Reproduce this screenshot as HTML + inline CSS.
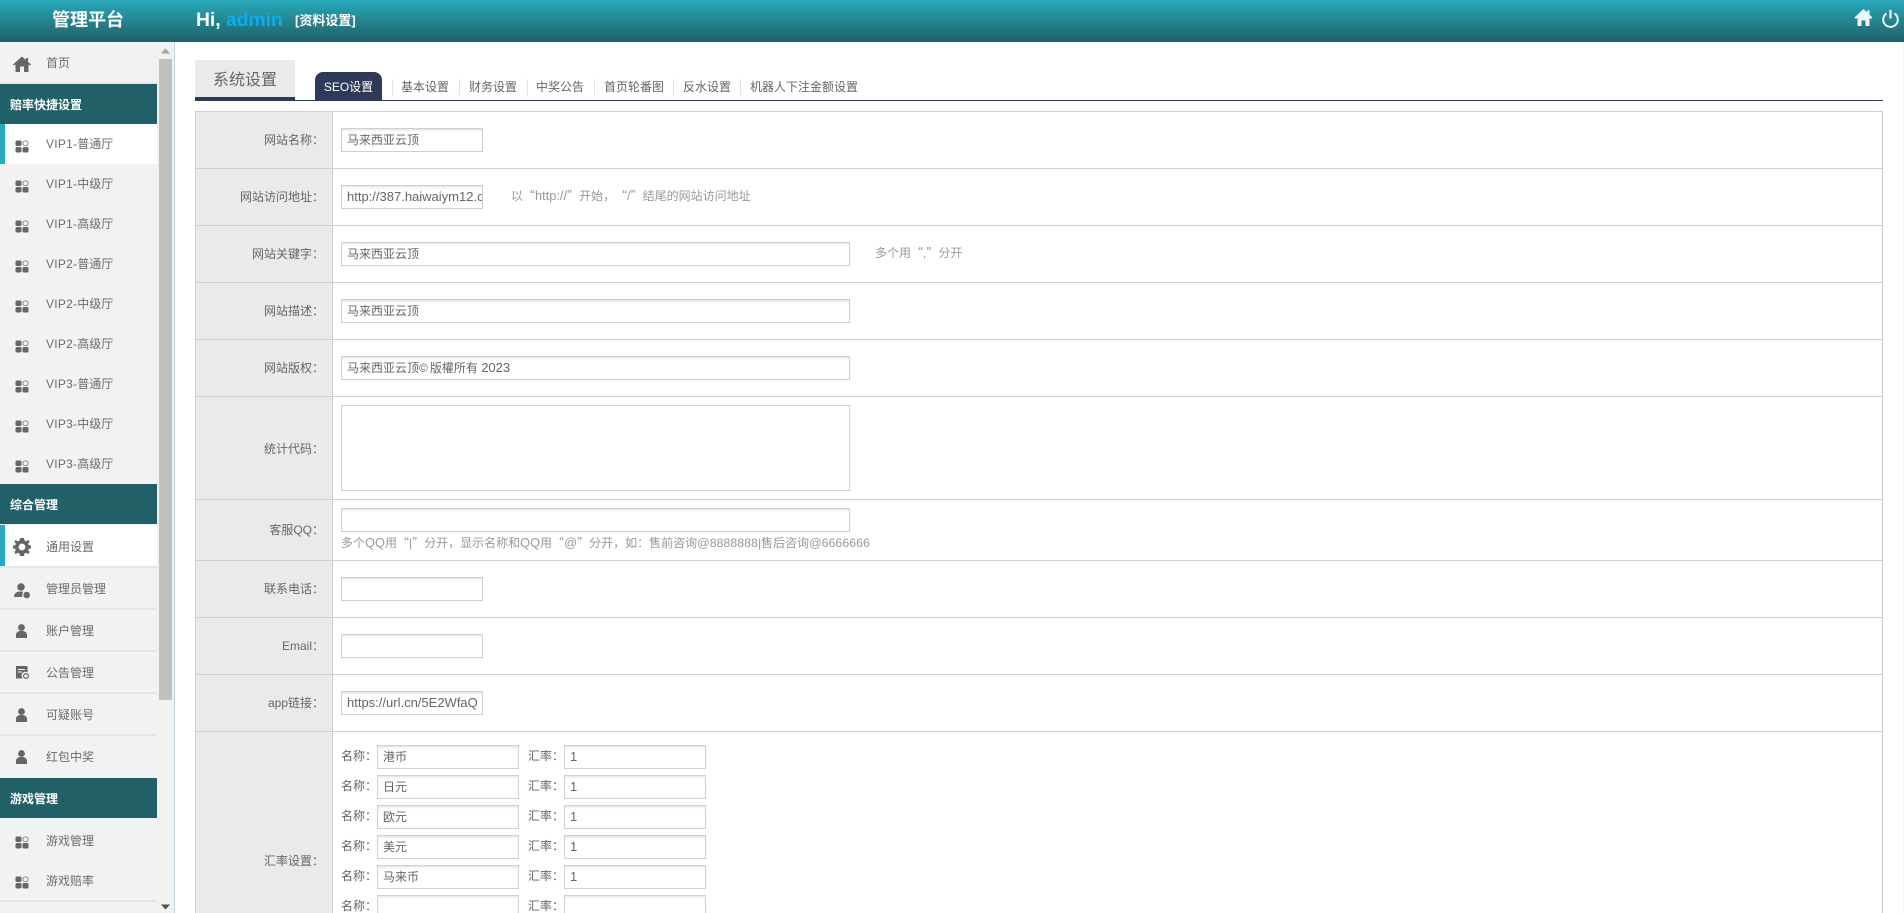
<!DOCTYPE html>
<html lang="zh-CN"><head><meta charset="utf-8"><title>管理平台</title>
<style>
html,body{margin:0;padding:0;width:1904px;height:913px;overflow:hidden;background:#fff}
body{position:relative;font-family:"Liberation Sans","Noto Sans CJK SC",sans-serif;font-size:12px;color:#666;text-spacing-trim:space-all}
div,svg{position:absolute;box-sizing:border-box}
#wrap{left:0;top:0;width:1904px;height:913px;overflow:hidden}
.hd{left:0;top:0;width:1904px;height:42px;background:linear-gradient(#28a9ba,#205f65)}
.w{color:#fff;font-weight:bold;white-space:nowrap}
.side{left:0;top:42px;width:157px;height:871px;background:#f2f2f2}
.sec{left:0;width:157px;height:40px;background:#206066;color:#fff;font-weight:bold;line-height:42px;padding-left:10px}
.act{left:0;width:157px;background:#fff;border-left:5px solid #27abba}
.ln{left:0;width:157px;height:2px;background:#e6e6e6}
.t{left:46px;line-height:20px;height:20px;white-space:nowrap;color:#6b6b6b}
.v{letter-spacing:.25px}
.sb{left:157px;top:42px;width:17px;height:871px;background:#f1f1f1}
.th{left:159px;top:59px;width:13px;height:641px;background:#c1c1c1}
.tb{left:195px;top:111px;width:1688px;height:802px;border:1px solid #cfcfcf;border-width:1px 1px 0 1px}
.lc{left:196px;width:136px;background:#eaeaea}
.r{left:195px;width:1688px;height:1px;background:#cfcfcf}
.l{left:196px;width:128px;text-align:right;line-height:20px;height:20px;white-space:nowrap}
.i{height:24px;border:1px solid #d0d0d0;box-shadow:inset 0 2px 2px -1px #dedede;background:#fff;padding-left:5px;line-height:22px;overflow:hidden;white-space:nowrap;color:#666}
.s{width:142px}.g{width:509px}
.h{line-height:20px;height:20px;white-space:nowrap;color:#999}
.q{font-family:"Noto Sans CJK SC",sans-serif}
.la{font-size:12.8px}
.ld{font-size:12.4px}
.lb{font-size:13px}
.tab{top:77px;height:20px;line-height:20px;color:#666;white-space:nowrap}
.dv{top:79px;width:1px;height:16px;background:#e3e3e3}
</style></head><body><div id="wrap">
<div class="hd"></div>
<div class="w" style="left:52px;top:7px;font-size:18px;line-height:26px">管理平台</div>
<div class="w" style="left:196px;top:8px;font-size:19.3px;line-height:26px">Hi, <span style="color:#0badee">admin</span></div>
<div class="w" style="left:295px;top:10px;font-size:13px;line-height:22px">[资料设置]</div>
<svg style="left:1854px;top:8px" width="19" height="19" viewBox="0 0 19 19"><path d="M9.5 1 L0.5 9.5 L2 11 L3.5 9.7 V18 H7.5 V12.5 H11.5 V18 H15.5 V9.7 L17 11 L18.5 9.5 L15.5 6.7 V2.5 H13 V4.4 Z" fill="#eef6f7"/></svg>
<svg style="left:1881px;top:9px" width="19" height="19" viewBox="0 0 19 19"><path d="M5.5 4.5 A7.3 7.3 0 1 0 13.5 4.5" fill="none" stroke="#eef6f7" stroke-width="2"/><path d="M9.5 1 V9.5" stroke="#eef6f7" stroke-width="2.2"/></svg>

<div class="side"></div>
<div class="sb"></div><div class="th"></div>
<svg style="left:161px;top:48px" width="10" height="6"><path d="M0 5.5 L4.5 .5 L9 5.5Z" fill="#a3a3a3"/></svg>
<svg style="left:161px;top:904px" width="10" height="6"><path d="M0 .5 L4.5 5.5 L9 .5Z" fill="#505050"/></svg>
<div style="left:174px;top:42px;width:1px;height:871px;background:#bfd3dc"></div>
<div style="left:1903px;top:42px;width:1px;height:871px;background:#f2f2f2"></div>

<svg style="left:13px;top:55px" width="18" height="18" viewBox="0 0 18 18"><path d="M9 1.5 L0 9.5 L1 10.5 L2.5 9.5 V17 H7 V11.5 H11 V17 H15.5 V9.5 L17 10.5 L18 9.5 L15 6.8 V3 H13 V5 Z" fill="#666"/></svg>
<div class="t" style="top:53px">首页</div>
<div class="ln" style="top:82px"></div>

<div class="sec" style="top:84px">赔率快捷设置</div>
<div class="act" style="top:124px;height:40px"></div>
<div class="t" style="top:134px"><span class="v">VIP1-</span>普通厅</div>
<div class="t" style="top:174px"><span class="v">VIP1-</span>中级厅</div>
<div class="t" style="top:214px"><span class="v">VIP1-</span>高级厅</div>
<div class="t" style="top:254px"><span class="v">VIP2-</span>普通厅</div>
<div class="t" style="top:294px"><span class="v">VIP2-</span>中级厅</div>
<div class="t" style="top:334px"><span class="v">VIP2-</span>高级厅</div>
<div class="t" style="top:374px"><span class="v">VIP3-</span>普通厅</div>
<div class="t" style="top:414px"><span class="v">VIP3-</span>中级厅</div>
<div class="t" style="top:454px"><span class="v">VIP3-</span>高级厅</div>
<svg style="left:15px;top:140px" width="14" height="13" viewBox="0 0 14 14" preserveAspectRatio="none"><g fill="#666"><rect x=".5" y=".5" width="6" height="6" rx="1.5"/><rect x=".5" y="7.5" width="6" height="6" rx="1.5"/><rect x="7.5" y="7.5" width="6" height="6" rx="1.5"/></g><circle cx="10.5" cy="3.5" r="2.6" fill="none" stroke="#888"/></svg>
<svg style="left:15px;top:180px" width="14" height="13" viewBox="0 0 14 14" preserveAspectRatio="none"><g fill="#666"><rect x=".5" y=".5" width="6" height="6" rx="1.5"/><rect x=".5" y="7.5" width="6" height="6" rx="1.5"/><rect x="7.5" y="7.5" width="6" height="6" rx="1.5"/></g><circle cx="10.5" cy="3.5" r="2.6" fill="none" stroke="#888"/></svg>
<svg style="left:15px;top:220px" width="14" height="13" viewBox="0 0 14 14" preserveAspectRatio="none"><g fill="#666"><rect x=".5" y=".5" width="6" height="6" rx="1.5"/><rect x=".5" y="7.5" width="6" height="6" rx="1.5"/><rect x="7.5" y="7.5" width="6" height="6" rx="1.5"/></g><circle cx="10.5" cy="3.5" r="2.6" fill="none" stroke="#888"/></svg>
<svg style="left:15px;top:260px" width="14" height="13" viewBox="0 0 14 14" preserveAspectRatio="none"><g fill="#666"><rect x=".5" y=".5" width="6" height="6" rx="1.5"/><rect x=".5" y="7.5" width="6" height="6" rx="1.5"/><rect x="7.5" y="7.5" width="6" height="6" rx="1.5"/></g><circle cx="10.5" cy="3.5" r="2.6" fill="none" stroke="#888"/></svg>
<svg style="left:15px;top:300px" width="14" height="13" viewBox="0 0 14 14" preserveAspectRatio="none"><g fill="#666"><rect x=".5" y=".5" width="6" height="6" rx="1.5"/><rect x=".5" y="7.5" width="6" height="6" rx="1.5"/><rect x="7.5" y="7.5" width="6" height="6" rx="1.5"/></g><circle cx="10.5" cy="3.5" r="2.6" fill="none" stroke="#888"/></svg>
<svg style="left:15px;top:340px" width="14" height="13" viewBox="0 0 14 14" preserveAspectRatio="none"><g fill="#666"><rect x=".5" y=".5" width="6" height="6" rx="1.5"/><rect x=".5" y="7.5" width="6" height="6" rx="1.5"/><rect x="7.5" y="7.5" width="6" height="6" rx="1.5"/></g><circle cx="10.5" cy="3.5" r="2.6" fill="none" stroke="#888"/></svg>
<svg style="left:15px;top:380px" width="14" height="13" viewBox="0 0 14 14" preserveAspectRatio="none"><g fill="#666"><rect x=".5" y=".5" width="6" height="6" rx="1.5"/><rect x=".5" y="7.5" width="6" height="6" rx="1.5"/><rect x="7.5" y="7.5" width="6" height="6" rx="1.5"/></g><circle cx="10.5" cy="3.5" r="2.6" fill="none" stroke="#888"/></svg>
<svg style="left:15px;top:420px" width="14" height="13" viewBox="0 0 14 14" preserveAspectRatio="none"><g fill="#666"><rect x=".5" y=".5" width="6" height="6" rx="1.5"/><rect x=".5" y="7.5" width="6" height="6" rx="1.5"/><rect x="7.5" y="7.5" width="6" height="6" rx="1.5"/></g><circle cx="10.5" cy="3.5" r="2.6" fill="none" stroke="#888"/></svg>
<svg style="left:15px;top:460px" width="14" height="13" viewBox="0 0 14 14" preserveAspectRatio="none"><g fill="#666"><rect x=".5" y=".5" width="6" height="6" rx="1.5"/><rect x=".5" y="7.5" width="6" height="6" rx="1.5"/><rect x="7.5" y="7.5" width="6" height="6" rx="1.5"/></g><circle cx="10.5" cy="3.5" r="2.6" fill="none" stroke="#888"/></svg>

<div class="sec" style="top:484px">综合管理</div>
<div class="act" style="top:525px;height:41px"></div>
<div class="ln" style="top:566px"></div><div class="ln" style="top:608px"></div><div class="ln" style="top:650px"></div><div class="ln" style="top:692px"></div><div class="ln" style="top:734px"></div>
<div class="t" style="top:537px">通用设置</div>
<div class="t" style="top:579px">管理员管理</div>
<div class="t" style="top:621px">账户管理</div>
<div class="t" style="top:663px">公告管理</div>
<div class="t" style="top:705px">可疑账号</div>
<div class="t" style="top:747px">红包中奖</div>
<svg style="left:13px;top:538px" width="18" height="18" viewBox="0 0 18 18"><path fill-rule="evenodd" fill="#666" d="M7 0 H11 L11.5 2.5 L13.3 3.3 L15.4 1.9 L16.6 4 L15.2 5.6 L15.8 7.3 L18 7.5 V10.5 L15.8 10.7 L15.2 12.4 L16.6 14 L15.4 16.1 L13.3 14.7 L11.5 15.5 L11 18 H7 L6.5 15.5 L4.7 14.7 L2.6 16.1 L1.4 14 L2.8 12.4 L2.2 10.7 L0 10.5 V7.5 L2.2 7.3 L2.8 5.6 L1.4 4 L2.6 1.9 L4.7 3.3 L6.5 2.5 Z M9 5.6 A3.4 3.4 0 1 0 9 12.4 A3.4 3.4 0 1 0 9 5.6 Z"/></svg>
<svg style="left:14px;top:583px" width="17" height="16" viewBox="0 0 17 16"><g fill="#666"><circle cx="7" cy="4" r="3.8"/><path d="M0 14 C0 10 3 8.5 7 8.5 C8 8.5 8.8 8.6 9.4 8.8 C8.2 10 7.8 12.5 8.6 14 Z"/><circle cx="12.7" cy="12" r="3.3"/></g></svg>
<svg style="left:16px;top:624px" width="11" height="14" viewBox="0 0 11 14"><g fill="#666"><circle cx="5.5" cy="3.5" r="3.4"/><path d="M0 14 V11 C0 8.5 2 7.5 3.5 7 H7.5 C9 7.5 11 8.5 11 11 V14 Z"/></g></svg>
<svg style="left:16px;top:666px" width="13" height="13" viewBox="0 0 13 13"><path fill="#666" d="M0 0 H11.5 V6.5 A3.3 3.3 0 0 0 7 12.5 H0 Z"/><path d="M2 3.5 H9 M2 6 H6" stroke="#f2f2f2"/><circle cx="10" cy="10" r="2.4" fill="none" stroke="#666" stroke-width="1.2"/></svg>
<svg style="left:16px;top:708px" width="11" height="14" viewBox="0 0 11 14"><g fill="#666"><circle cx="5.5" cy="3.5" r="3.4"/><path d="M0 14 V11 C0 8.5 2 7.5 3.5 7 H7.5 C9 7.5 11 8.5 11 11 V14 Z"/></g></svg>
<svg style="left:16px;top:750px" width="11" height="14" viewBox="0 0 11 14"><g fill="#666"><circle cx="5.5" cy="3.5" r="3.4"/><path d="M0 14 V11 C0 8.5 2 7.5 3.5 7 H7.5 C9 7.5 11 8.5 11 11 V14 Z"/></g></svg>

<div class="sec" style="top:778px">游戏管理</div>
<div class="t" style="top:831px">游戏管理</div>
<div class="t" style="top:871px">游戏赔率</div>
<div class="ln" style="top:900px"></div>
<svg style="left:15px;top:836px" width="14" height="13" viewBox="0 0 14 14" preserveAspectRatio="none"><g fill="#666"><rect x=".5" y=".5" width="6" height="6" rx="1.5"/><rect x=".5" y="7.5" width="6" height="6" rx="1.5"/><rect x="7.5" y="7.5" width="6" height="6" rx="1.5"/></g><circle cx="10.5" cy="3.5" r="2.6" fill="none" stroke="#888"/></svg>
<svg style="left:15px;top:876px" width="14" height="13" viewBox="0 0 14 14" preserveAspectRatio="none"><g fill="#666"><rect x=".5" y=".5" width="6" height="6" rx="1.5"/><rect x=".5" y="7.5" width="6" height="6" rx="1.5"/><rect x="7.5" y="7.5" width="6" height="6" rx="1.5"/></g><circle cx="10.5" cy="3.5" r="2.6" fill="none" stroke="#888"/></svg>

<div style="left:195px;top:60px;width:100px;height:37px;background:#eaeaea"></div>
<div style="left:195px;top:97px;width:100px;height:4px;background:#2f3a5a"></div>
<div style="left:195px;top:100px;width:1688px;height:1px;background:#2f3a5a"></div>
<div style="left:213px;top:68px;font-size:16px;line-height:26px;color:#666;white-space:nowrap">系统设置</div>
<div style="left:315px;top:72px;width:67px;height:29px;background:#2f3a5a;border-radius:8px 8px 0 0;color:#fff;text-align:center;line-height:30px;white-space:nowrap">SEO设置</div>
<div class="dv" style="left:392px"></div><div class="tab" style="left:401px">基本设置</div>
<div class="dv" style="left:459px"></div><div class="tab" style="left:469px">财务设置</div>
<div class="dv" style="left:527px"></div><div class="tab" style="left:536px">中奖公告</div>
<div class="dv" style="left:594px"></div><div class="tab" style="left:604px">首页轮番图</div>
<div class="dv" style="left:673px"></div><div class="tab" style="left:683px">反水设置</div>
<div class="dv" style="left:740px"></div><div class="tab" style="left:750px">机器人下注金额设置</div>

<div class="tb"></div>
<div class="lc" style="top:112px;height:801px"></div>
<div style="left:332px;top:112px;width:1px;height:801px;background:#cfcfcf"></div>
<div class="r" style="top:168px"></div><div class="r" style="top:225px"></div><div class="r" style="top:282px"></div><div class="r" style="top:339px"></div><div class="r" style="top:396px"></div><div class="r" style="top:499px"></div><div class="r" style="top:560px"></div><div class="r" style="top:617px"></div><div class="r" style="top:674px"></div><div class="r" style="top:731px"></div>

<div class="l" style="top:130px">网站名称：</div>
<div class="i s" style="left:341px;top:128px">马来西亚云顶</div>
<div class="l" style="top:187px">网站访问地址：</div>
<div class="i s" style="left:341px;top:185px"><span class="lb">http://387.haiwaiym12.com/</span></div>
<div class="h" style="left:511px;top:186px">以<span class="q">“</span><span class="la">http://</span><span class="q">”</span>开始，<span class="q">“</span><span class="la">/</span><span class="q">”</span>结尾的网站访问地址</div>
<div class="l" style="top:244px">网站关键字：</div>
<div class="i g" style="left:341px;top:242px">马来西亚云顶</div>
<div class="h" style="left:875px;top:243px">多个用<span class="q">“</span>,<span class="q">”</span>分开</div>
<div class="l" style="top:301px">网站描述：</div>
<div class="i g" style="left:341px;top:299px">马来西亚云顶</div>
<div class="l" style="top:358px">网站版权：</div>
<div class="i g" style="left:341px;top:356px">马来西亚云顶<span style="letter-spacing:2px">©</span>版權所有 <span class="lb">2023</span></div>
<div class="l" style="top:439px">统计代码：</div>
<div style="left:341px;top:405px;width:509px;height:86px;border:1px solid #d0d0d0;background:#fff"></div>
<div class="l" style="top:520px">客服QQ：</div>
<div class="i g" style="left:341px;top:508px"></div>
<div class="h" style="left:341px;top:533px">多个<span class="la">QQ</span>用<span class="q">“</span>|<span class="q">”</span>分开，显示名称和<span class="la">QQ</span>用<span class="q">“</span><span class="la">@</span><span class="q">”</span>分开，如：售前咨询<span class="ld">@8888888</span>|售后咨询<span class="ld">@6666666</span></div>
<div class="l" style="top:579px">联系电话：</div>
<div class="i s" style="left:341px;top:577px"></div>
<div class="l" style="top:636px">Email：</div>
<div class="i s" style="left:341px;top:634px"></div>
<div class="l" style="top:693px">app链接：</div>
<div class="i s" style="left:341px;top:691px"><span class="lb">https://url.cn/5E2WfaQ</span></div>
<div class="l" style="top:851px">汇率设置：</div>

<div class="h" style="left:341px;top:746px;color:#666">名称：</div><div class="i s" style="left:377px;top:745px">港币</div><div class="h" style="left:528px;top:746px;color:#666">汇率：</div><div class="i s" style="left:564px;top:745px"><span class="lb">1</span></div>
<div class="h" style="left:341px;top:776px;color:#666">名称：</div><div class="i s" style="left:377px;top:775px">日元</div><div class="h" style="left:528px;top:776px;color:#666">汇率：</div><div class="i s" style="left:564px;top:775px"><span class="lb">1</span></div>
<div class="h" style="left:341px;top:806px;color:#666">名称：</div><div class="i s" style="left:377px;top:805px">欧元</div><div class="h" style="left:528px;top:806px;color:#666">汇率：</div><div class="i s" style="left:564px;top:805px"><span class="lb">1</span></div>
<div class="h" style="left:341px;top:836px;color:#666">名称：</div><div class="i s" style="left:377px;top:835px">美元</div><div class="h" style="left:528px;top:836px;color:#666">汇率：</div><div class="i s" style="left:564px;top:835px"><span class="lb">1</span></div>
<div class="h" style="left:341px;top:866px;color:#666">名称：</div><div class="i s" style="left:377px;top:865px">马来币</div><div class="h" style="left:528px;top:866px;color:#666">汇率：</div><div class="i s" style="left:564px;top:865px"><span class="lb">1</span></div>
<div class="h" style="left:341px;top:896px;height:17px;color:#666">名称：</div><div class="i s" style="left:377px;top:895px;height:18px;border-bottom:0"></div><div class="h" style="left:528px;top:896px;height:17px;color:#666">汇率：</div><div class="i s" style="left:564px;top:895px;height:18px;border-bottom:0"></div>
</div></body></html>
